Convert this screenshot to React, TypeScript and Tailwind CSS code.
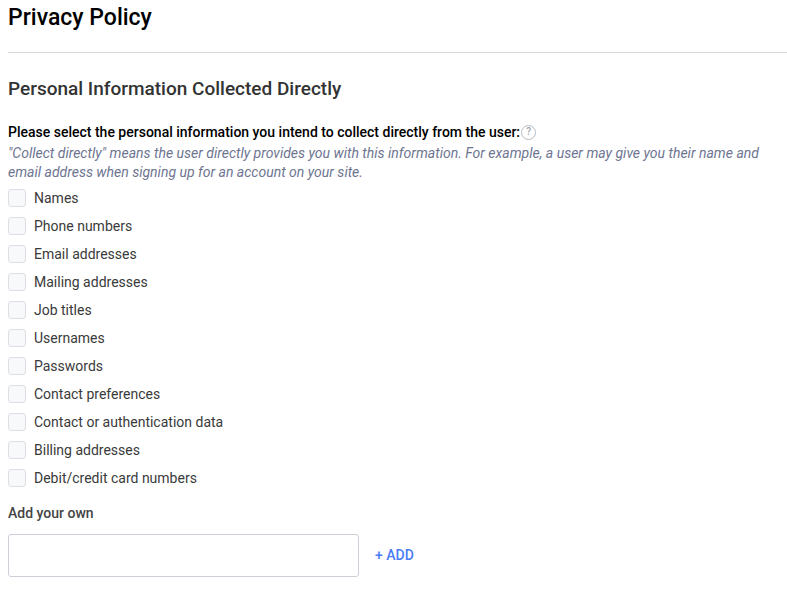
import React from "react";

const items = ["Names","Phone numbers","Email addresses","Mailing addresses","Job titles","Usernames","Passwords","Contact preferences","Contact or authentication data","Billing addresses","Debit/credit card numbers"];

export default function App() {
  return (
    <div className="pl-2 bg-white" style={{ fontFamily: "Roboto, sans-serif" }}>
      <h1 className="text-[23px] font-medium text-black leading-[28px] pt-[4px]">Privacy Policy</h1>
      <div className="mt-[20px] h-px bg-[#d5d9de]" />
      <h2 className="mt-[24px] text-[19px] font-medium text-[#333] leading-[24px]">Personal Information Collected Directly</h2>
      <div className="mt-[22px] flex items-center text-[14px] font-medium text-black leading-[18px]">
        Please select the personal information you intend to collect directly from the user:
        <span className="ml-[1px] w-[15px] h-[15px] rounded-full border border-[#b8bcc2] text-[#a0a4aa] text-[10px] flex items-center justify-center leading-none">?</span>
      </div>
      <p className="mt-[3px] text-[14px] italic text-[#6e7591] leading-[19px] pr-2">
        "Collect directly" means the user directly provides you with this information. For example, a user may give you their name and email address when signing up for an account on your site.
      </p>
      <div className="mt-[2px] flex flex-col">
        {items.map((t) => (
          <label key={t} className="flex items-center h-[28px] gap-[8px] text-[14px] text-[#3a3a3a]">
            <span className="w-[18px] h-[18px] rounded-[3px] border border-[#dcdfe4] bg-[#f8f9fb]" />
            {t}
          </label>
        ))}
      </div>
      <div className="mt-[12px] text-[14px] font-medium text-[#444] leading-[18px]">Add your own</div>
      <div className="mt-[12px] flex items-center">
        <input className="w-[351px] h-[43px] rounded-[3px] border border-[#ccd1d8] outline-none" />
        <span className="ml-[16px] text-[14px] font-medium text-[#4a7cf6]">+ ADD</span>
      </div>
      <div className="h-[20px]" />
    </div>
  );
}
